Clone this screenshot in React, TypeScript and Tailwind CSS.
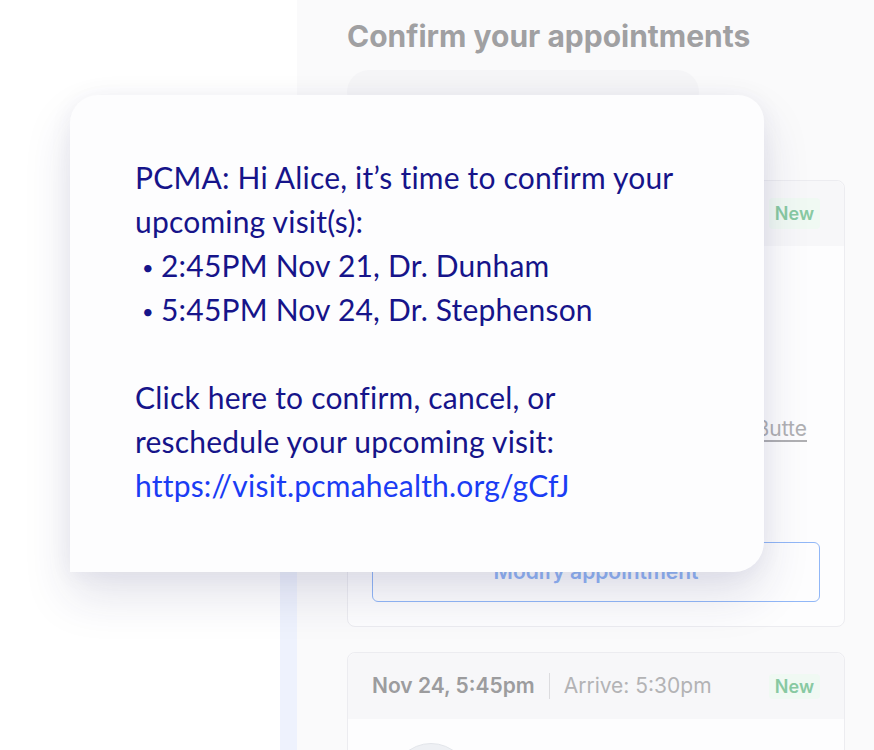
import React from 'react';

const Sms: React.FC = () => (
  <div className="absolute left-[70px] top-[95px] w-[694px] h-[477px] bg-[#fdfdfe] rounded-tl-[28px] rounded-tr-[26px] rounded-br-[30px] shadow-[0_24px_48px_rgba(40,40,100,0.13),0_2px_24px_rgba(40,40,100,0.05)] pl-[65px] pt-[60px] font-['Lato',sans-serif] text-[30px] leading-[44px] tracking-[0.2px] text-[#16148a]">
    <div>PCMA: Hi Alice, it’s time to confirm your</div>
    <div>upcoming visit(s):</div>
    <div className="pl-[7px]">
      <span className="inline-block w-[19px] text-[20px] leading-none align-[2px]">•</span>2:45PM Nov 21, Dr. Dunham
    </div>
    <div className="pl-[7px]">
      <span className="inline-block w-[19px] text-[20px] leading-none align-[2px]">•</span>5:45PM Nov 24, Dr. Stephenson
    </div>
    <div className="h-[44px]" />
    <div>Click here to confirm, cancel, or</div>
    <div>reschedule your upcoming visit:</div>
    <div className="text-[#1a3cf4]">https://visit.pcmahealth.org/gCfJ</div>
  </div>
);

const NewBadge: React.FC = () => (
  <span className="px-[6px] py-[2px] rounded bg-[#f0f9f3] text-[18px] font-semibold text-[#88c9a2]">New</span>
);

export default function App() {
  return (
    <div className="relative w-full h-[750px] overflow-hidden bg-white font-['Inter',sans-serif]">
      <div className="flex h-full">
        <div className="w-[280px] shrink-0" />
        <div className="w-[17px] shrink-0 mt-[120px] bg-[#eef2fd]" />
        <div className="flex-1 bg-[#fafafb] pl-[50px] pr-[29px]">
          <h1 className="mt-[18px] text-[30px] leading-[36px] font-bold text-[#a0a0a2]">Confirm your appointments</h1>
          <div className="mt-[16px] h-[44px] w-[352px] rounded-[22px] bg-[#f5f5f7]" />

          <div className="mt-[66px] rounded-lg border border-[#ececf0] bg-[#fdfdfe]">
            <div className="h-[65px] flex items-center justify-end px-6 bg-[#f7f7f9] rounded-t-lg">
              <NewBadge />
            </div>
            <div className="px-6 pb-6">
              <div className="h-[170px]" />
              <div className="flex justify-end pr-[13px] text-[21px] leading-[26px] text-[#b0b0b3]">
                <span className="underline underline-offset-4">Directions to Butte</span>
              </div>
              <div className="h-[100px]" />
              <div className="h-[60px] rounded-md border-[1.5px] border-[#91b7f7] flex items-center justify-center text-[21px] font-semibold text-[#93b6f5]">
                Modify appointment
              </div>
            </div>
          </div>

          <div className="mt-[25px] rounded-lg border border-[#ececf0] bg-[#fdfdfe]">
            <div className="h-[66px] flex items-center px-6 bg-[#f7f7f9] rounded-t-lg text-[21px]">
              <span className="font-semibold text-[#9c9c9e]">Nov 24, 5:45pm</span>
              <span className="mx-[14px] h-[26px] w-px bg-[#dcdcdf]" />
              <span className="text-[#b3b3b5]">Arrive: 5:30pm</span>
              <span className="ml-auto"><NewBadge /></span>
            </div>
            <div className="px-6 pt-6 pb-6">
              <div className="ml-[20px] w-[78px] h-[78px] rounded-full bg-[#eef0f4] border border-[#e2e5ea]" />
            </div>
          </div>
        </div>
      </div>
      <Sms />
    </div>
  );
}
